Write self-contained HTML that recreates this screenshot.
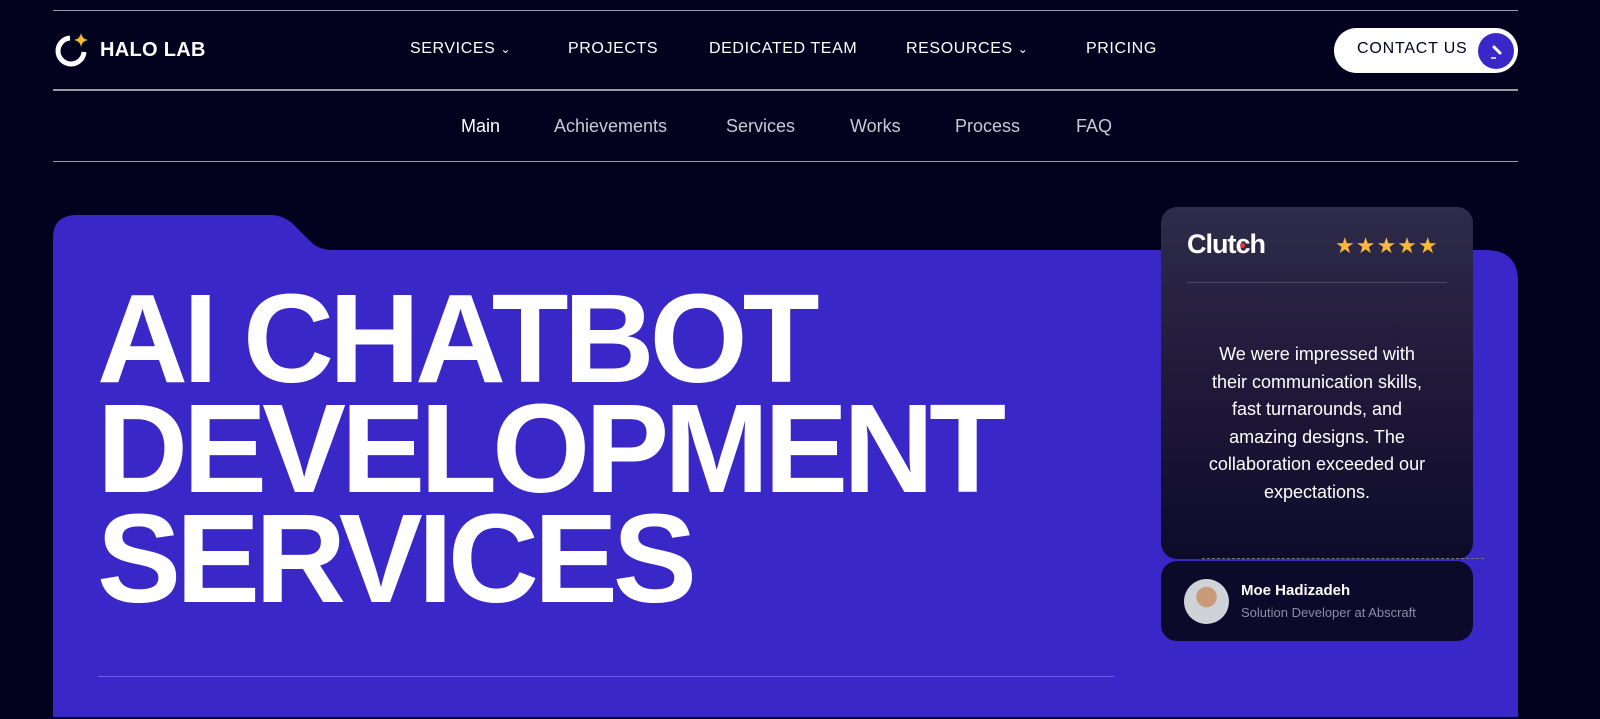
<!DOCTYPE html>
<html><head><meta charset="utf-8"><style>
*{margin:0;padding:0;box-sizing:border-box}
body{width:1600px;height:719px;background:#02021e;font-family:"Liberation Sans",sans-serif;color:#fff;position:relative;overflow:hidden}
.line{position:absolute;left:53px;width:1465px;height:1px;background:#9a9aa5}
.nav{position:absolute;top:40px;font-size:16px;letter-spacing:.6px;font-weight:500}
.sub{position:absolute;top:116px;font-size:18px;color:#c9c9d3}
.h1{position:absolute;left:97px;top:284px;font-size:126px;font-weight:bold;line-height:110px;letter-spacing:-5px}
</style></head><body>
<div class="line" style="top:10px"></div>
<div class="line" style="top:89px;height:2px"></div>
<div class="line" style="top:161px"></div>
<svg style="position:absolute;left:53px;top:33px" width="36" height="36" viewBox="0 0 36 36"><path d="M17 5 A13 13 0 1 0 31 19" fill="none" stroke="#fff" stroke-width="5"/><path d="M28 0 Q29 6 35 7 Q29 8 28 14 Q27 8 21 7 Q27 6 28 0Z" fill="#f5b93a"/></svg>
<div style="position:absolute;left:100px;top:39px;font-size:20px;font-weight:bold;letter-spacing:.3px">HALO LAB</div>
<div class="nav" style="left:410px">SERVICES <span style="font-size:12px">&#8964;</span></div>
<div class="nav" style="left:568px">PROJECTS</div>
<div class="nav" style="left:709px">DEDICATED TEAM</div>
<div class="nav" style="left:906px">RESOURCES <span style="font-size:12px">&#8964;</span></div>
<div class="nav" style="left:1086px">PRICING</div>
<div style="position:absolute;left:1334px;top:28px;width:184px;height:45px;border-radius:23px;background:#fff"></div>
<div style="position:absolute;left:1357px;top:40px;font-size:16px;letter-spacing:.8px;color:#02021e;font-weight:500">CONTACT US</div>
<div style="position:absolute;left:1478px;top:33px;width:36px;height:36px;border-radius:50%;background:#3a27c8"></div>
<svg style="position:absolute;left:1486px;top:41px" width="20" height="20"><path d="M8 6 L14 12" stroke="#fff" stroke-width="3" stroke-linecap="round"/><path d="M5 17 H10" stroke="#fff" stroke-width="1.5"/></svg>
<div class="sub" style="left:461px;color:#fff">Main</div>
<div class="sub" style="left:554px">Achievements</div>
<div class="sub" style="left:726px">Services</div>
<div class="sub" style="left:850px">Works</div>
<div class="sub" style="left:955px">Process</div>
<div class="sub" style="left:1076px">FAQ</div>
<svg style="position:absolute;left:53px;top:214px" width="1465" height="503" viewBox="0 0 1465 503"><path d="M0 24 Q0 1 24 1 L218 1 Q230 1 240 10 L258 28 Q266 36 280 36 L1433 36 Q1465 36 1465 68 L1465 503 L0 503Z" fill="#3927c7"/><rect x="45" y="462" width="1016" height="1" fill="#6b5de0"/></svg>
<div class="h1">AI CHATBOT<br>DEVELOPMENT<br>SERVICES</div>
<div style="position:absolute;left:1161px;top:207px;width:312px;height:352px;border-radius:16px;background:linear-gradient(180deg,#2e2c4a 0%,#231a3a 45%,#0d0b2a 100%)"></div>
<div style="position:absolute;left:1187px;top:229px;font-size:27px;font-weight:bold;letter-spacing:-1px">Clut<span style="position:relative">c<span style="position:absolute;left:5px;top:14px;width:5px;height:5px;border-radius:50%;background:#e8343a"></span></span>h</div>
<div style="position:absolute;left:1335px;top:233px;font-size:22px;color:#f5b93a;letter-spacing:1px">★★★★★</div>
<div style="position:absolute;left:1187px;top:282px;width:260px;height:1px;background:#4a4862"></div>
<div style="position:absolute;left:1167px;top:341px;width:300px;text-align:center;font-size:18px;line-height:27.6px;white-space:nowrap">We were impressed with<br>their communication skills,<br>fast turnarounds, and<br>amazing designs. The<br>collaboration exceeded our<br>expectations.</div>
<div style="position:absolute;left:1202px;top:558px;width:282px;border-top:1px dashed #777"></div>
<div style="position:absolute;left:1161px;top:561px;width:312px;height:80px;border-radius:16px;background:#0b0a2a"></div>
<div style="position:absolute;left:1184px;top:579px;width:45px;height:45px;border-radius:50%;background:radial-gradient(circle at 50% 40%,#c99a7a 0 28%,#cfd2d6 30%)"></div>
<div style="position:absolute;left:1241px;top:582px;font-size:15px;font-weight:bold">Moe Hadizadeh</div>
<div style="position:absolute;left:1241px;top:605px;font-size:13px;color:#8d8ca3">Solution Developer at Abscraft</div>
</body></html>
